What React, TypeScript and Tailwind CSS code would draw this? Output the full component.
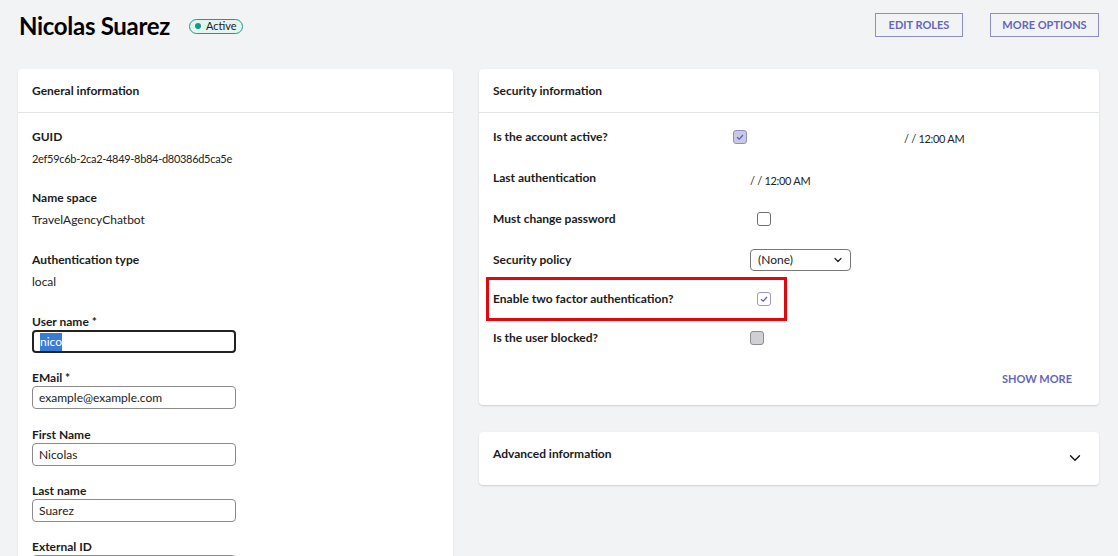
import { ChevronDown } from 'lucide-react';

const font = { fontFamily: 'Lato, "Noto Sans", sans-serif' };

function Check({ checked, variant }: { checked?: boolean; variant: 'filled' | 'outline' | 'gray' | 'empty' }) {
    const box =
        variant === 'filled'
            ? 'bg-[#c9c9e4] border-[#8f8fbf]'
            : variant === 'outline'
              ? 'bg-white border-[#9a9ad0]'
              : variant === 'gray'
                ? 'bg-[#d0d0d4] border-[#8d8d92]'
                : 'bg-white border-[#6e6e6e]';
    return (
        <div className={`w-[14px] h-[14px] rounded-[3px] border flex items-center justify-center ${box}`}>
            {checked && (
                <svg width="10" height="10" viewBox="0 0 10 10">
                    <path d="M2 5.2 L4.2 7.2 L8 3" fill="none" stroke="#5b5bc4" strokeWidth="1.2" />
                </svg>
            )}
        </div>
    );
}

function Field({ label, value, selected }: { label: string; value: string; selected?: boolean }) {
    return (
        <div className="flex flex-col">
            <div className="text-[12px] font-bold text-[#1b1b1b] h-[17px] leading-[17px]">{label}</div>
            <div
                className={`w-[204px] h-[23px] rounded-[4px] flex items-center px-[6px] text-[12px] ${
                    selected ? 'border-2 border-[#222]' : 'border border-[#8b8b8b]'
                }`}
            >
                {selected ? <span className="bg-[#3a7bd5] text-white">{value}</span> : <span className="text-[#222]">{value}</span>}
            </div>
        </div>
    );
}

function Info({ label, value, narrow }: { label: string; value: string; narrow?: boolean }) {
    return (
        <div className="flex flex-col">
            <div className="text-[12px] font-bold text-[#1b1b1b] leading-[17px]">{label}</div>
            <div className={`text-[#222] leading-[17px] mt-[5px] ${narrow ? 'text-[11px] tracking-[-0.3px]' : 'text-[12px]'}`}>{value}</div>
        </div>
    );
}

export default function App() {
    return (
        <div className="w-[1118px] h-[556px] overflow-hidden bg-[#f2f3f5]" style={font}>
            {/* Header */}
            <div className="flex items-start justify-between pl-[19px] pr-[19px] pt-[13px] h-[69px]">
                <div className="flex items-center gap-[19px]">
                    <h1 className="text-[24px] font-bold text-black leading-[26px] tracking-[-0.3px]">Nicolas Suarez</h1>
                    <div className="flex items-center gap-[5px] h-[15px] px-[5px] rounded-full border border-[#1d9b8a] bg-[#e4f4f1] text-[11px] text-[#222]">
                        <span className="w-[6px] h-[6px] rounded-full bg-[#129a86]" />
                        Active
                    </div>
                </div>
                <div className="flex items-center gap-[27px]">
                    <button className="w-[88px] h-[24px] border border-[#8d8fc4] text-[11px] font-bold text-[#6466bb]">
                        EDIT ROLES
                    </button>
                    <button className="w-[109px] h-[24px] border border-[#8d8fc4] text-[11px] font-bold text-[#6466bb]">
                        MORE OPTIONS
                    </button>
                </div>
            </div>

            <div className="flex gap-[26px] pl-[18px]">
                {/* General information */}
                <div className="w-[435px] h-[500px] bg-white rounded-[4px] shadow-[0_1px_2px_rgba(0,0,0,0.12)]">
                    <div className="h-[44px] border-b border-[#e3e4e6] flex items-center px-[14px] text-[12px] font-bold text-[#1b1b1b]">
                        General information
                    </div>
                    <div className="px-[14px] pt-[15px] flex flex-col">
                        <Info label="GUID" value="2ef59c6b-2ca2-4849-8b84-d80386d5ca5e" narrow />
                        <div className="h-[22px]" />
                        <Info label="Name space" value="TravelAgencyChatbot" />
                        <div className="h-[23px]" />
                        <Info label="Authentication type" value="local" />
                        <div className="h-[23px]" />
                        <Field label="User name *" value="nico" selected />
                        <div className="h-[16px]" />
                        <Field label="EMail *" value="example@example.com" />
                        <div className="h-[17px]" />
                        <Field label="First Name" value="Nicolas" />
                        <div className="h-[16px]" />
                        <Field label="Last name" value="Suarez" />
                        <div className="h-[16px]" />
                        <Field label="External ID" value="" />
                    </div>
                </div>

                {/* Right column */}
                <div className="flex flex-col gap-[27px]">
                    <div className="w-[620px] h-[336px] bg-white rounded-[4px] shadow-[0_1px_2px_rgba(0,0,0,0.15)] flex flex-col">
                        <div className="h-[44px] border-b border-[#e3e4e6] flex items-center px-[14px] text-[12px] font-bold text-[#1b1b1b]">
                            Security information
                        </div>
                        <div className="flex-1 text-[12px]">
                            <div className="flex items-center h-[14px] mt-[17px]">
                                <div className="w-[254px] pl-[14px] font-bold text-[#1b1b1b]">Is the account active?</div>
                                <Check variant="filled" checked />
                                <div className="ml-[157px] mt-[5px] text-[11px] tracking-[-0.3px] text-[#222]">/ / 12:00 AM</div>
                            </div>
                            <div className="flex items-center h-[14px] mt-[27px]">
                                <div className="w-[271px] pl-[14px] font-bold text-[#1b1b1b]">Last authentication</div>
                                <div className="mt-[7px] text-[11px] tracking-[-0.3px] text-[#222]">/ / 12:00 AM</div>
                            </div>
                            <div className="flex items-center h-[14px] mt-[27px]">
                                <div className="w-[278px] pl-[14px] font-bold text-[#1b1b1b]">Must change password</div>
                                <Check variant="empty" />
                            </div>
                            <div className="flex items-center h-[22px] mt-[23px]">
                                <div className="w-[271px] pl-[14px] font-bold text-[#1b1b1b]">Security policy</div>
                                <div className="w-[101px] h-[22px] rounded-[4px] border border-[#777] flex items-center justify-between pl-[7px] pr-[6px] text-[#222]">
                                    (None)
                                    <ChevronDown size={12} strokeWidth={2.5} color="#222" />
                                </div>
                            </div>
                            <div className="ml-[7px] mt-[6px] w-[301px] h-[44px] border-[3px] border-[#e0070f] flex items-center">
                                <div className="w-[268px] pl-[4px] font-bold text-[#1b1b1b]">Enable two factor authentication?</div>
                                <Check variant="outline" checked />
                            </div>
                            <div className="flex items-center h-[14px] mt-[10px]">
                                <div className="w-[271px] pl-[14px] font-bold text-[#1b1b1b]">Is the user blocked?</div>
                                <Check variant="gray" />
                            </div>
                            <div className="flex justify-end pr-[27px] mt-[26px]">
                                <span className="text-[11px] font-bold text-[#6466bb]">SHOW MORE</span>
                            </div>
                        </div>
                    </div>

                    <div className="w-[620px] h-[53px] bg-white rounded-[4px] shadow-[0_1px_2px_rgba(0,0,0,0.15)] flex items-center justify-between pl-[14px] pr-[15px] pb-[10px]">
                        <span className="text-[12px] font-bold text-[#1b1b1b]">Advanced information</span>
                        <ChevronDown size={18} strokeWidth={1.8} color="#111" className="mt-[8px]" />
                    </div>
                </div>
            </div>
        </div>
    );
}
